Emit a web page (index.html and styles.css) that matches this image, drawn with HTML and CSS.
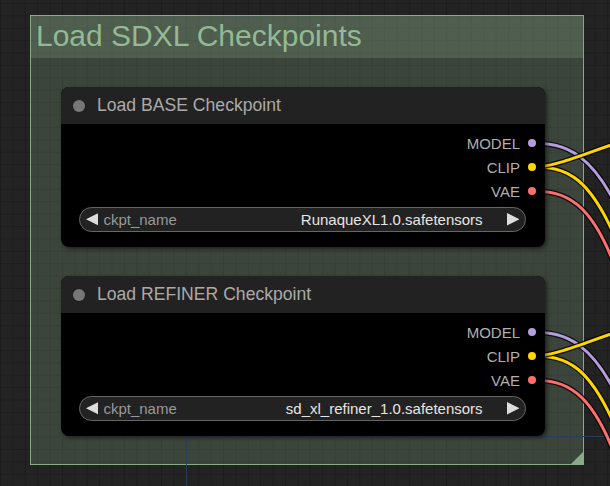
FILE: index.html
```html
<!DOCTYPE html>
<html>
<head>
    <title>Load SDXL Checkpoints</title>
    <meta charset="UTF-8">
    <link rel="stylesheet" href="styles.css">
</head>
<body>
    <div class="canvas">
        <div class="group">
            <div class="group-title">Load SDXL Checkpoints</div>
            <div class="group-body">
                <div class="node">
                    <div class="node-title"><span class="node-dot"></span>Load BASE Checkpoint</div>
                    <div class="node-body">
                        <div class="output"><span>MODEL</span><span class="slot slot-model"></span></div>
                        <div class="output"><span>CLIP</span><span class="slot slot-clip"></span></div>
                        <div class="output"><span>VAE</span><span class="slot slot-vae"></span></div>
                        <div class="widget">
                            <svg class="arrow arrow-left" viewBox="0 0 12 12"><polygon points="12,0 0,6 12,12"/></svg>
                            <span class="widget-label">ckpt_name</span>
                            <span class="widget-value">RunaqueXL1.0.safetensors</span>
                            <svg class="arrow" viewBox="0 0 12 12"><polygon points="0,0 12,6 0,12"/></svg>
                        </div>
                    </div>
                </div>
                <div class="node">
                    <div class="node-title"><span class="node-dot"></span>Load REFINER Checkpoint</div>
                    <div class="node-body">
                        <div class="output"><span>MODEL</span><span class="slot slot-model"></span></div>
                        <div class="output"><span>CLIP</span><span class="slot slot-clip"></span></div>
                        <div class="output"><span>VAE</span><span class="slot slot-vae"></span></div>
                        <div class="widget">
                            <svg class="arrow arrow-left" viewBox="0 0 12 12"><polygon points="12,0 0,6 12,12"/></svg>
                            <span class="widget-label">ckpt_name</span>
                            <span class="widget-value">sd_xl_refiner_1.0.safetensors</span>
                            <svg class="arrow" viewBox="0 0 12 12"><polygon points="0,0 12,6 0,12"/></svg>
                        </div>
                    </div>
                </div>
            </div>
        </div>

        <!-- node hidden behind the group, only its outline shows -->
        <div class="ghost-node"></div>

        <svg class="links" width="610" height="486" viewBox="0 0 610 486">
            <g id="links-base">
                <path class="edge" d="M532,143 C565,143 595,152 625,225"/>
                <path class="wire wire-model" d="M532,143 C565,143 595,152 625,225"/>
                <path class="edge" d="M532,191 C565,191 592,200 618,275"/>
                <path class="wire wire-vae" d="M532,191 C565,191 592,200 618,275"/>
                <path class="edge" d="M532,167 C565,167 592,172 625,262"/>
                <path class="wire wire-clip" d="M532,167 C565,167 592,172 625,262"/>
                <path class="edge" d="M532,167 C555,167 575,157 620,142"/>
                <path class="wire wire-clip" d="M532,167 C555,167 575,157 620,142"/>
            </g>
            <use href="#links-base" transform="translate(0,189)"/>
        </svg>
    </div>
</body>
</html>
```

FILE: styles.css
```css
body {
    margin: 0;
    background-color: #222;
    font-family: "Liberation Sans", Arial, sans-serif;
}
.canvas {
    position: relative;
    width: 610px;
    height: 486px;
    overflow: hidden;
    box-sizing: border-box;
    padding: 15px 0 0 30px;
    background-color: #232323;
    background-image:
        linear-gradient(to right, #1c1c1c 1px, transparent 1px),
        linear-gradient(to bottom, #1c1c1c 1px, transparent 1px);
    background-size: 12.4px 12.4px;
    background-position: 0 3px;
}
.group {
    position: relative;
    width: 554px;
    height: 450px;
    box-sizing: border-box;
    border: 1px solid #88aa88;
    background-color: rgba(136, 170, 136, 0.25);
}
.group::after {
    content: "";
    position: absolute;
    right: 0;
    bottom: 0;
    width: 0;
    height: 0;
    border-left: 12px solid transparent;
    border-bottom: 12px solid #88aa88;
}
.group-title {
    height: 42px;
    padding-left: 5px;
    font-size: 30px;
    line-height: 40px;
    color: #94b994;
    background-color: rgba(136, 170, 136, 0.25);
    white-space: nowrap;
}
.group-body {
    display: flex;
    flex-direction: column;
    gap: 29px;
    padding: 29px 0 0 30px;
}
.node {
    position: relative;
    z-index: 3;
    width: 484px;
    border-radius: 8px;
    overflow: hidden;
    background-color: #000;
    box-shadow: 2px 2px 4px rgba(0, 0, 0, 0.5);
}
.node-title {
    display: flex;
    align-items: center;
    gap: 12px;
    height: 37px;
    padding-left: 12px;
    background-color: #222;
    color: #aaa;
    font-size: 17.6px;
}
.node-dot {
    width: 12px;
    height: 12px;
    border-radius: 50%;
    background-color: #777;
}
.node-body {
    padding: 7px 0 15px 0;
}
.output {
    display: flex;
    justify-content: flex-end;
    align-items: center;
    gap: 8px;
    height: 24px;
    padding-right: 9px;
    color: #b0b0b0;
    font-size: 15px;
}
.slot {
    width: 8px;
    height: 8px;
    border-radius: 50%;
}
.slot-model { background-color: #b39ddb; }
.slot-clip { background-color: #ffd500; }
.slot-vae { background-color: #ff6e6e; }
.widget {
    display: flex;
    align-items: center;
    height: 25px;
    margin: 4px 19px 0 18px;
    padding: 0 6px;
    box-sizing: border-box;
    border: 1px solid #666;
    border-radius: 13px;
    background-color: #222;
    font-size: 15px;
}
.arrow {
    width: 12.4px;
    height: 12.4px;
    fill: #ddd;
}
.arrow-left {
    margin-right: 5px;
}
.widget-label {
    color: #999;
}
.widget-value {
    margin-left: auto;
    margin-right: 24px;
    color: #e6e6e6;
}
.ghost-node {
    position: absolute;
    z-index: 1;
    left: 186px;
    top: 436px;
    width: 500px;
    height: 100px;
    border-top: 1px solid #2c3d58;
    border-left: 1px solid #2c3d58;
}
.links {
    position: absolute;
    z-index: 2;
    left: 0;
    top: 0;
}
.edge {
    fill: none;
    stroke: rgba(0, 0, 0, 0.8);
    stroke-width: 5.5;
}
.wire {
    fill: none;
    stroke-width: 3;
}
.wire-model { stroke: #b39ddb; }
.wire-clip { stroke: #ffd500; }
.wire-vae { stroke: #ff6e6e; }
```
